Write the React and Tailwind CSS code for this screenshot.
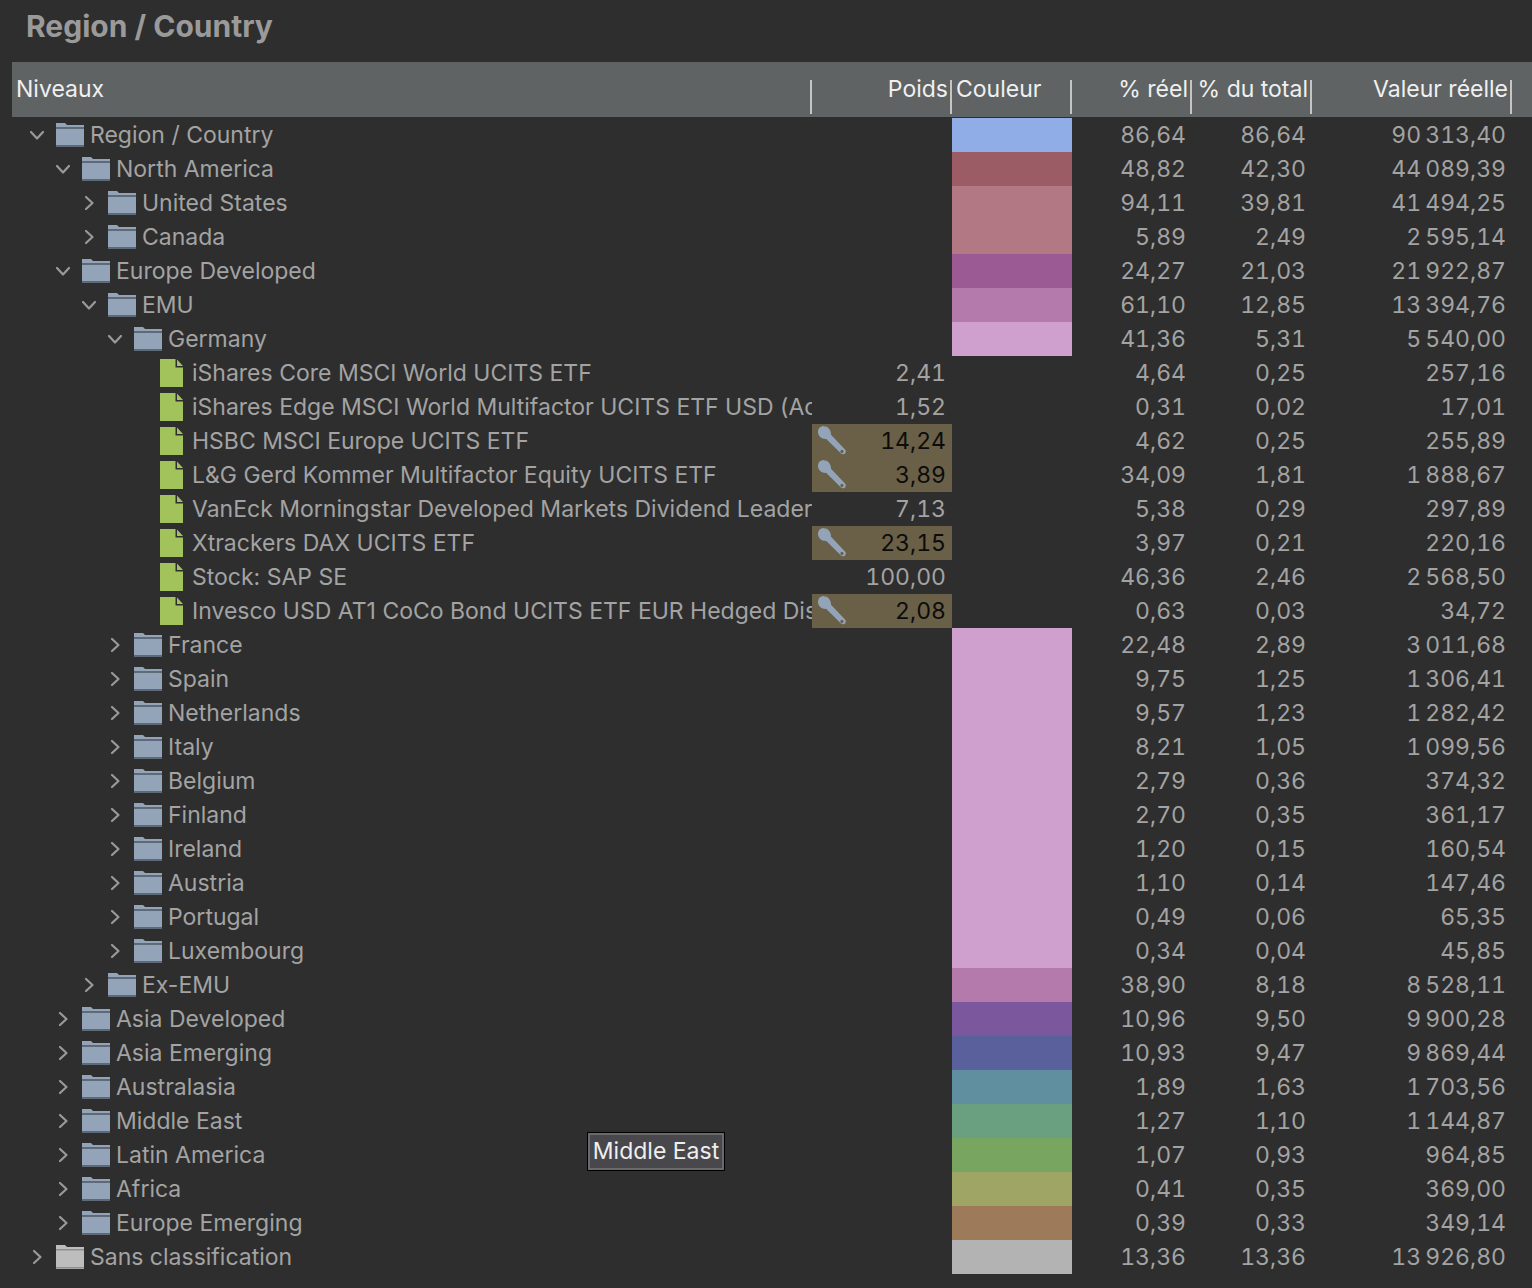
import React from 'react';

const FONT = 'font-[Inter,"Liberation_Sans",sans-serif]';

// level, type, label, poids, couleur, reel, total, valeur, open, flagged
const rows = [
  { level: 0, label: 'Region / Country', color: 'bg-[#90ade8]', reel: '86,64', total: '86,64', value: '90\u202f313,40', open: true },
  { level: 1, label: 'North America', color: 'bg-[#9b5c66]', reel: '48,82', total: '42,30', value: '44\u202f089,39', open: true },
  { level: 2, label: 'United States', color: 'bg-[#b27883]', reel: '94,11', total: '39,81', value: '41\u202f494,25' },
  { level: 2, label: 'Canada', color: 'bg-[#b27883]', reel: '5,89', total: '2,49', value: '2\u202f595,14' },
  { level: 1, label: 'Europe Developed', color: 'bg-[#9b5a93]', reel: '24,27', total: '21,03', value: '21\u202f922,87', open: true },
  { level: 2, label: 'EMU', color: 'bg-[#b47aab]', reel: '61,10', total: '12,85', value: '13\u202f394,76', open: true },
  { level: 3, label: 'Germany', color: 'bg-[#cf9fcd]', reel: '41,36', total: '5,31', value: '5\u202f540,00', open: true },
  { level: 4, leaf: true, label: 'iShares Core MSCI World UCITS ETF', poids: '2,41', reel: '4,64', total: '0,25', value: '257,16' },
  { level: 4, leaf: true, label: 'iShares Edge MSCI World Multifactor UCITS ETF USD (Acc)', poids: '1,52', reel: '0,31', total: '0,02', value: '17,01' },
  { level: 4, leaf: true, label: 'HSBC MSCI Europe UCITS ETF', poids: '14,24', flagged: true, reel: '4,62', total: '0,25', value: '255,89' },
  { level: 4, leaf: true, label: 'L&G Gerd Kommer Multifactor Equity UCITS ETF', poids: '3,89', flagged: true, reel: '34,09', total: '1,81', value: '1\u202f888,67' },
  { level: 4, leaf: true, label: 'VanEck Morningstar Developed Markets Dividend Leaders', poids: '7,13', reel: '5,38', total: '0,29', value: '297,89' },
  { level: 4, leaf: true, label: 'Xtrackers DAX UCITS ETF', poids: '23,15', flagged: true, reel: '3,97', total: '0,21', value: '220,16' },
  { level: 4, leaf: true, label: 'Stock: SAP SE', poids: '100,00', reel: '46,36', total: '2,46', value: '2\u202f568,50' },
  { level: 4, leaf: true, label: 'Invesco USD AT1 CoCo Bond UCITS ETF EUR Hedged Dist', poids: '2,08', flagged: true, reel: '0,63', total: '0,03', value: '34,72' },
  { level: 3, label: 'France', color: 'bg-[#cf9fcd]', reel: '22,48', total: '2,89', value: '3\u202f011,68' },
  { level: 3, label: 'Spain', color: 'bg-[#cf9fcd]', reel: '9,75', total: '1,25', value: '1\u202f306,41' },
  { level: 3, label: 'Netherlands', color: 'bg-[#cf9fcd]', reel: '9,57', total: '1,23', value: '1\u202f282,42' },
  { level: 3, label: 'Italy', color: 'bg-[#cf9fcd]', reel: '8,21', total: '1,05', value: '1\u202f099,56' },
  { level: 3, label: 'Belgium', color: 'bg-[#cf9fcd]', reel: '2,79', total: '0,36', value: '374,32' },
  { level: 3, label: 'Finland', color: 'bg-[#cf9fcd]', reel: '2,70', total: '0,35', value: '361,17' },
  { level: 3, label: 'Ireland', color: 'bg-[#cf9fcd]', reel: '1,20', total: '0,15', value: '160,54' },
  { level: 3, label: 'Austria', color: 'bg-[#cf9fcd]', reel: '1,10', total: '0,14', value: '147,46' },
  { level: 3, label: 'Portugal', color: 'bg-[#cf9fcd]', reel: '0,49', total: '0,06', value: '65,35' },
  { level: 3, label: 'Luxembourg', color: 'bg-[#cf9fcd]', reel: '0,34', total: '0,04', value: '45,85' },
  { level: 2, label: 'Ex-EMU', color: 'bg-[#b47aab]', reel: '38,90', total: '8,18', value: '8\u202f528,11' },
  { level: 1, label: 'Asia Developed', color: 'bg-[#7b579d]', reel: '10,96', total: '9,50', value: '9\u202f900,28' },
  { level: 1, label: 'Asia Emerging', color: 'bg-[#5a609c]', reel: '10,93', total: '9,47', value: '9\u202f869,44' },
  { level: 1, label: 'Australasia', color: 'bg-[#60909f]', reel: '1,89', total: '1,63', value: '1\u202f703,56' },
  { level: 1, label: 'Middle East', color: 'bg-[#6aa07f]', reel: '1,27', total: '1,10', value: '1\u202f144,87' },
  { level: 1, label: 'Latin America', color: 'bg-[#78a560]', reel: '1,07', total: '0,93', value: '964,85' },
  { level: 1, label: 'Africa', color: 'bg-[#9fa564]', reel: '0,41', total: '0,35', value: '369,00' },
  { level: 1, label: 'Europe Emerging', color: 'bg-[#9d7b5a]', reel: '0,39', total: '0,33', value: '349,14' },
  { level: 0, label: 'Sans classification', color: 'bg-[#b3b3b3]', reel: '13,36', total: '13,36', value: '13\u202f926,80', grey: true },
];

const Chevron = ({ open }) => (
  <svg width="16" height="16" viewBox="0 0 16 16" fill="none" stroke="#9a9a9a" strokeWidth="2.2" strokeLinecap="round" strokeLinejoin="round" className="shrink-0">
    {open ? <path d="M2 5l6 6.5L14 5" /> : <path d="M5 2l6.5 6L5 14" />}
  </svg>
);

const Folder = ({ grey }) => {
  const body = grey ? '#bdbdbd' : '#93a4b8';
  const edge = grey ? '#a6a6a6' : '#5f6b78';
  return (
    <svg width="28" height="24" viewBox="0 0 28 24" className="shrink-0">
      <path d="M0 0h9l2 2h17v2.5H0z" fill={body} />
      <rect x="0" y="4.5" width="28" height="1.5" fill={edge} />
      <rect x="0" y="6" width="28" height="16.5" fill={body} />
      <rect x="0" y="22.5" width="28" height="1.5" fill={edge} />
    </svg>
  );
};

const FileIcon = () => (
  <svg width="24" height="28" viewBox="0 0 24 28" className="shrink-0">
    <path d="M0 0h15.5v8.5H23V28H0z" fill="#a2c35b" />
    <path d="M17 0.5l6 6.5h-6z" fill="#a2c35b" />
  </svg>
);

const Wrench = () => (
  <svg width="32" height="32" viewBox="0 0 32 32" className="shrink-0">
    <path
      fillRule="evenodd"
      fill="#93a4b8"
      d="M6.5 1C3.5 1.3 1.2 3.2 1 6.3l5.3 3.2 4-1.5.3-4.3L7 1zM1 6.3C.7 11 4.5 14.3 9.3 14L24 28.6c2.6 2.3 6.6-1.4 4-4.2L14 9.7C14.3 5 10.5 .7 6.5 1l4.1 2.7-.3 4.3-4 1.5zM26 25.2a1.6 1.6 0 1 1-2.3 2.2 1.6 1.6 0 0 1 2.3-2.2z"
    />
  </svg>
);

const numClass = 'flex items-center justify-end pr-[6px] tabular-nums';

const Row = ({ row }) => (
  <div className="flex h-[34px] text-[23px] text-[#a3a3a3] leading-none">
    <div className="w-[800px] flex items-center overflow-hidden whitespace-nowrap" style={{ paddingLeft: 8 + row.level * 26 }}>
      <div className="w-[36px] shrink-0 flex justify-center pr-[2px]">
        {!row.leaf && <Chevron open={row.open} />}
      </div>
      {row.leaf ? <FileIcon /> : <Folder grey={row.grey} />}
      <span className={row.leaf ? 'ml-[8px]' : 'ml-[6px]'}>{row.label}</span>
    </div>
    <div className={`w-[140px] ${numClass} ${row.flagged ? 'bg-[#6a5f47] text-[#0c0c0c]' : ''}`}>
      {row.flagged && (
        <span className="mr-auto ml-[5px]"><Wrench /></span>
      )}
      {row.poids}
    </div>
    <div className={`w-[120px] ${row.color || ''}`} />
    <div className={`w-[120px] ${numClass}`}>{row.reel}</div>
    <div className={`w-[120px] ${numClass}`}>{row.total}</div>
    <div className={`w-[200px] ${numClass}`}>{row.value}</div>
  </div>
);

const HeaderCell = ({ width, right, children }) => (
  <div className={`${width} h-full relative flex items-center ${right ? 'justify-end pr-[4px]' : 'pl-[4px]'}`}>
    {children}
    <div className="absolute right-0 top-[18px] h-[34px] w-[2px] bg-[#c4c6c6]" />
  </div>
);

export default function App() {
  return (
    <div className={`${FONT} relative w-[1532px] h-[1288px] overflow-hidden bg-[#2e2e2e]`}>
      <h1 className="h-[62px] pl-[26px] pt-[8px] text-[30px] leading-[36px] font-bold text-[#9a9a9a] whitespace-pre">Region / Country</h1>
      <div className="ml-[12px] h-[55px] flex bg-[#5f6363] text-[23px] text-[#f0f0f0]">
        <HeaderCell width="w-[800px]">Niveaux</HeaderCell>
        <HeaderCell width="w-[140px]" right>Poids</HeaderCell>
        <HeaderCell width="w-[120px]">Couleur</HeaderCell>
        <HeaderCell width="w-[120px]" right>% réel</HeaderCell>
        <HeaderCell width="w-[120px]" right>% du total</HeaderCell>
        <HeaderCell width="w-[200px]" right>Valeur réelle</HeaderCell>
      </div>
      <div className="ml-[12px] mt-[1px]">
        {rows.map((row) => (
          <Row key={row.label} row={row} />
        ))}
      </div>
      {/* tooltip over the tree */}
      <div className="absolute left-[588px] top-[1133px] w-[136px] h-[37px] flex items-center justify-center bg-[#48484c] border-2 border-[#6a6a6c] outline outline-1 outline-black text-[23px] text-[#efefef]">
        Middle East
      </div>
    </div>
  );
}
